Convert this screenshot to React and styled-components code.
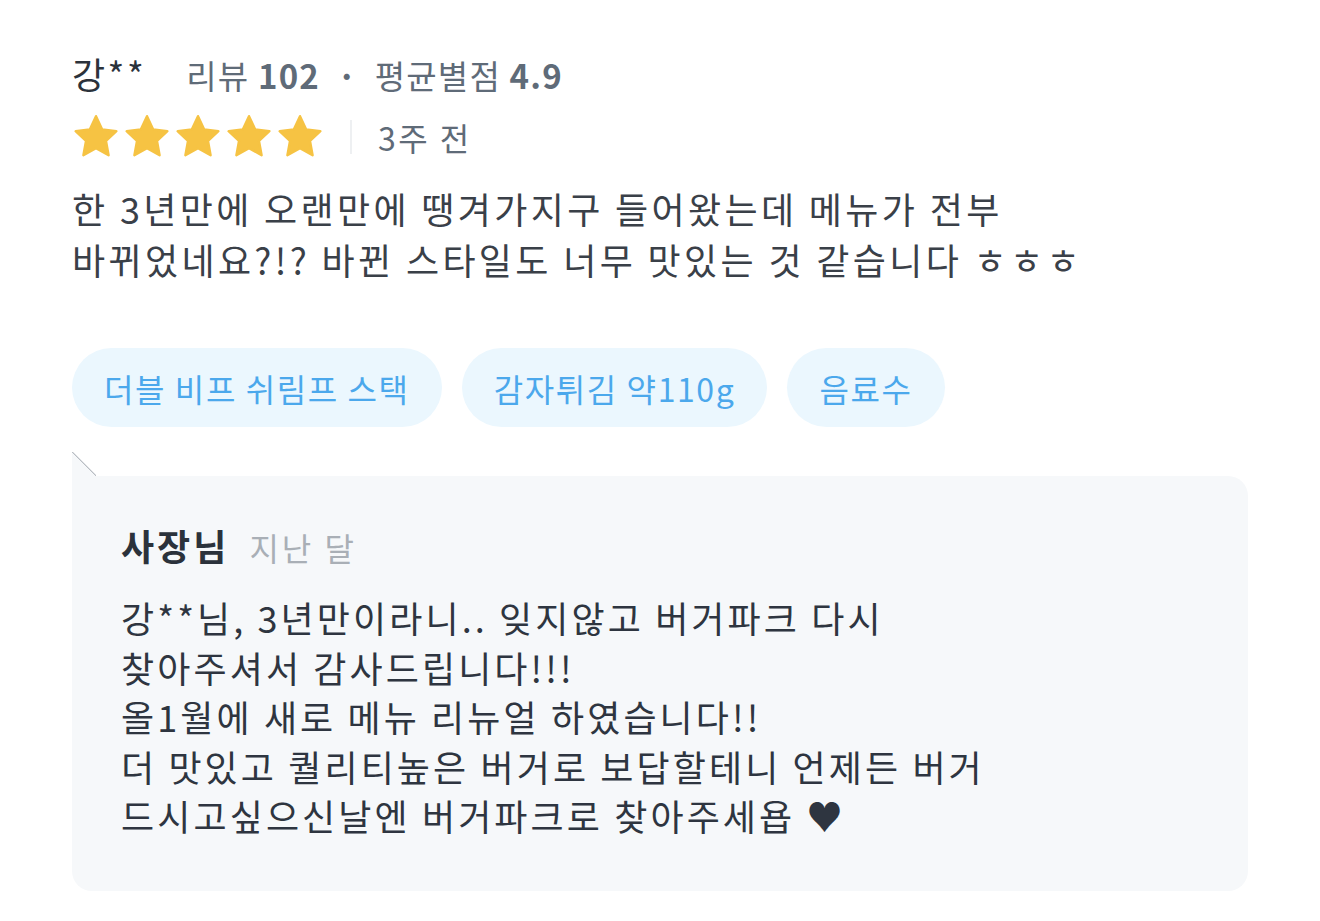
import React from 'react';
import styled, { createGlobalStyle } from 'styled-components';

const GlobalStyle = createGlobalStyle`
  body {
    margin: 0;
    background: #ffffff;
    font-family: "Noto Sans CJK KR", "Noto Sans", sans-serif;
  }
`;

const review = {
  name: '강**',
  reviewCount: 102,
  average: '4.9',
  rating: 5,
  date: '3주 전',
  text: ['한 3년만에 오랜만에 땡겨가지구 들어왔는데 메뉴가 전부', '바뀌었네요?!? 바뀐 스타일도 너무 맛있는 것 같습니다 ㅎㅎㅎ'],
  menus: ['더블 비프 쉬림프 스택', '감자튀김 약110g', '음료수'],
  reply: {
    author: '사장님',
    date: '지난 달',
    lines: [
      '강**님, 3년만이라니.. 잊지않고 버거파크 다시',
      '찾아주셔서 감사드립니다!!!',
      '올1월에 새로 메뉴 리뉴얼 하였습니다!!',
      '더 맛있고 퀄리티높은 버거로 보답할테니 언제든 버거',
      '드시고싶으신날엔 버거파크로 찾아주세욥 ♥',
    ],
  },
};

function Star() {
  return (
    <StarSvg viewBox="0 0 24 24">
      <path
        d="M12 1.6l3.1 6.6 7.1.9-5.2 4.9 1.3 7.1L12 17.6l-6.3 3.5 1.3-7.1-5.2-4.9 7.1-.9z"
        fill="#f6c343"
        stroke="#f6c343"
        strokeWidth="1.2"
        strokeLinejoin="round"
      />
    </StarSvg>
  );
}

export default function App() {
  return (
    <>
      <GlobalStyle />
      <Page>
        <Header>
          <Name>{review.name}</Name>
          <Stats>
            리뷰 <b>{review.reviewCount}</b>
            <Dot>·</Dot>
            평균별점 <b>{review.average}</b>
          </Stats>
        </Header>
        <RatingRow>
          <Stars>
            {Array.from({ length: review.rating }).map((_, i) => (
              <Star key={i} />
            ))}
          </Stars>
          <Divider />
          <DateText>{review.date}</DateText>
        </RatingRow>
        <Body>
          {review.text.map((l, i) => (
            <div key={i}>{l}</div>
          ))}
        </Body>
        <Chips>
          {review.menus.map((m) => (
            <Chip key={m}>{m}</Chip>
          ))}
        </Chips>
        <ReplyCard>
          <ReplyHead>
            <ReplyAuthor>{review.reply.author}</ReplyAuthor>
            <ReplyDate>{review.reply.date}</ReplyDate>
          </ReplyHead>
          <ReplyBody>
            {review.reply.lines.map((l, i) => (
              <div key={i}>{l}</div>
            ))}
          </ReplyBody>
        </ReplyCard>
      </Page>
    </>
  );
}

const Page = styled.div`
  width: 1176px;
  padding: 47px 0 30px 72px;
`;

const Header = styled.div`
  display: flex;
  align-items: baseline;
  height: 52px;
`;

const Name = styled.span`
  font-size: 36px;
  letter-spacing: 2.5px;
  color: #2b323b;
  margin-right: 40px;
`;

const Stats = styled.span`
  font-size: 33px;
  letter-spacing: 1.2px;
  color: #5f6b78;
  b {
    font-weight: 700;
  }
`;

const Dot = styled.span`
  margin: 0 17px;
  font-weight: 700;
`;

const RatingRow = styled.div`
  display: flex;
  align-items: center;
  height: 66px;
  margin-top: 5px;
`;

const Stars = styled.div`
  display: flex;
  gap: 3px;
`;

const StarSvg = styled.svg`
  width: 48px;
  height: 48px;
  display: block;
`;

const Divider = styled.div`
  width: 2px;
  height: 34px;
  background: #eef0f2;
  margin: 0 26px;
`;

const DateText = styled.span`
  font-size: 32px;
  letter-spacing: 2.5px;
  color: #5f6b78;
`;

const Body = styled.div`
  margin-top: 13px;
  font-size: 36px;
  letter-spacing: 3.35px;
  line-height: 51px;
  color: #3a4048;
`;

const Chips = styled.div`
  display: flex;
  gap: 20px;
  margin-top: 63px;
`;

const Chip = styled.div`
  height: 79px;
  padding: 0 32px;
  border-radius: 40px;
  background: #ebf7fe;
  color: #4ba8ec;
  font-size: 32px;
  letter-spacing: 1.6px;
  display: flex;
  align-items: center;
`;

const ReplyCard = styled.div`
  position: relative;
  margin-top: 49px;
  width: 1176px;
  box-sizing: border-box;
  height: 415px;
  padding: 43px 49px;
  background: #f6f8fa;
  border-radius: 0 20px 20px 20px;

  &::before {
    content: '';
    position: absolute;
    left: 0;
    top: -24px;
    width: 24px;
    height: 24px;
    background: linear-gradient(45deg, #f6f8fa 49%, #b9bec4 50%, transparent 54%);
  }
`;

const ReplyHead = styled.div`
  display: flex;
  align-items: baseline;
  gap: 20px;
`;

const ReplyAuthor = styled.span`
  font-size: 36px;
  font-weight: 700;
  letter-spacing: 3px;
  color: #2b323b;
`;

const ReplyDate = styled.span`
  font-size: 32px;
  letter-spacing: 3px;
  color: #a9afb6;
`;

const ReplyBody = styled.div`
  margin-top: 22px;
  font-size: 36px;
  letter-spacing: 3.1px;
  line-height: 49.5px;
  color: #2e3540;
`;
